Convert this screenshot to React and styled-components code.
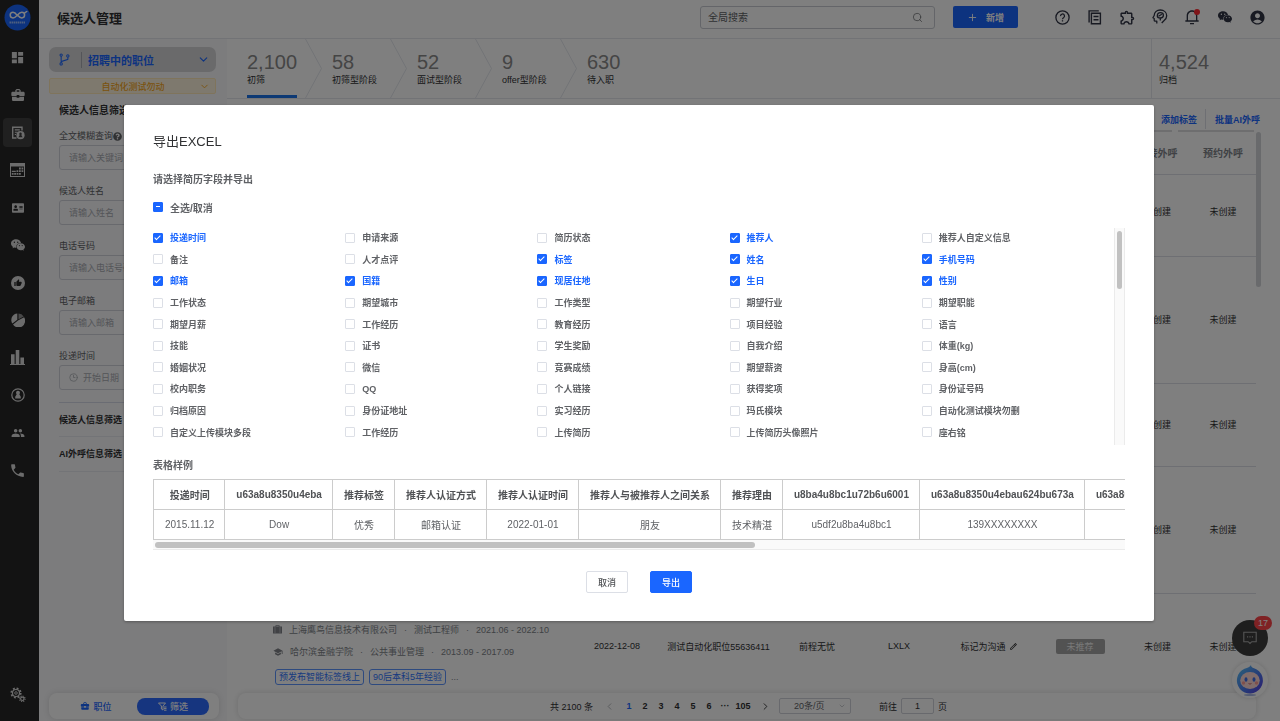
import { useEffect, useRef, useState } from "react";
import styled, { createGlobalStyle } from "styled-components";
import {
  MdAccountCircle,
  MdBusinessCenter,
  MdDashboard,
  MdOutlineExtension,
  MdPeople,
  MdPhone,
  MdSchool,
  MdThumbUp,
} from "react-icons/md";
import { AiFillWechat, AiOutlineBranches } from "react-icons/ai";
import { FaAddressCard, FaQuestionCircle } from "react-icons/fa";
import { RiNotification3Line, RiPencilLine } from "react-icons/ri";
import { ChevronDown, ChevronLeft, ChevronRight, Clock3, Plus, Search } from "lucide-react";

const GlobalStyle = createGlobalStyle`
  *, *::before, *::after {
    box-sizing: border-box;
  }

  body {
    margin: 0;
    overflow: hidden;
    color: #303133;
    font-family: "Liberation Sans", "Noto Sans CJK SC", sans-serif;
    font-size: 9px;
    background: #fff;
  }

  button, input, select {
    font-family: inherit;
    font-size: inherit;
    color: inherit;
  }

  button {
    padding: 0;
    border: 0;
    background: none;
    cursor: pointer;
  }

  a {
    color: inherit;
    text-decoration: none;
  }

  h1, h2, h3, p {
    margin: 0;
  }

  svg {
    flex: none;
  }
`;

/* ---------- page frame ---------- */

const Page = styled.div`
  display: flex;
  height: 100vh;
`;

const Sidebar = styled.nav`
  display: flex;
  flex-direction: column;
  align-items: center;
  flex: none;
  width: 39px;
  padding: 3px 0 12px;
  background: #262626;
  color: #d8d8d8;
`;

const SideList = styled.div`
  display: flex;
  flex-direction: column;
  justify-content: space-between;
  height: 442px;
  margin: 11px 0 auto;
`;

const SideLink = styled.a`
  display: flex;
  align-items: center;
  justify-content: center;
  width: 29px;
  height: 29px;
  margin-right: 4px;
  border-radius: 4px;
  background: ${({ $active }) => ($active ? "#404040" : "transparent")};
`;

const Content = styled.div`
  display: flex;
  flex-direction: column;
  flex: 1;
  min-width: 0;
`;

const Header = styled.header`
  display: flex;
  align-items: center;
  flex: none;
  height: 39px;
  padding: 0 15px 4px 18px;
  border-bottom: 1px solid #e4e7ed;
`;

const PageTitle = styled.h1`
  flex: 1;
  font-size: 13px;
  font-weight: 600;
`;

const SearchBox = styled.label`
  display: flex;
  align-items: center;
  width: 235px;
  height: 23px;
  padding: 0 11px 0 7px;
  border: 1px solid #c8cbd2;
  border-radius: 3px;
  color: #606266;
`;

const SearchInput = styled.input`
  flex: 1;
  min-width: 0;
  padding: 0;
  border: 0;
  outline: 0;
  font-size: 10px;
  background: none;

  &::placeholder {
    color: #606266;
  }
`;

const AddButton = styled.button`
  display: flex;
  align-items: center;
  justify-content: center;
  gap: 8px;
  width: 65px;
  height: 22px;
  margin: 0 36px 0 18px;
  border-radius: 2px;
  background: #1a66ff;
  color: #fff;
  font-weight: 600;
`;

const HeaderIcons = styled.div`
  display: flex;
  justify-content: space-between;
  width: 211px;
  color: #303445;
`;

const IconButton = styled.button`
  position: relative;
  display: flex;
  align-items: center;
  justify-content: center;
  width: 16px;
  height: 16px;
`;

const RedDot = styled.span`
  position: absolute;
  top: 0;
  right: 0;
  width: 6px;
  height: 6px;
  border-radius: 50%;
  background: #ff2a33;
`;

const Body = styled.div`
  display: flex;
  flex: 1;
  min-height: 0;
`;

/* ---------- filter panel ---------- */

const FilterPanel = styled.aside`
  display: flex;
  flex-direction: column;
  flex: none;
  width: 188px;
  padding: 8px 8px 2px 10px;
  background: #f8f8fa;
`;

const JobPicker = styled.button`
  display: flex;
  align-items: center;
  flex: none;
  height: 25px;
  margin-right: 3px;
  padding: 0 6px 0 8px;
  border-radius: 7px;
  background: #d4d4d6;
  color: #1a66ff;
  font-size: 11px;
  font-weight: 600;
  text-align: left;
`;

const JobName = styled.span`
  flex: 1;
  margin-left: 9px;
  padding-left: 6px;
  border-left: 1px solid #a9abb2;
`;

const Notice = styled.button`
  display: flex;
  align-items: center;
  flex: none;
  height: 16px;
  margin: 6px 3px 0 0;
  padding: 0 5px 0 17px;
  border: 1px solid #ffe9b8;
  border-radius: 2px;
  background: #fdf3dc;
  color: #f5a623;
  font-weight: 500;
`;

const NoticeText = styled.span`
  flex: 1;
`;

const FilterForm = styled.form`
  margin: 9px 0 auto 10px;
`;

const FilterTitle = styled.h2`
  margin-bottom: 10px;
  font-size: 10px;
  font-weight: 600;
  line-height: 16px;
`;

const Field = styled.label`
  display: block;
  margin-bottom: 14px;
`;

const FieldName = styled.span`
  display: flex;
  align-items: center;
  margin-bottom: 2px;
  color: #606266;
  line-height: 14px;
`;

const FieldBox = styled.span`
  display: flex;
  align-items: center;
  gap: 5px;
  height: 25px;
  padding: 0 9px;
  border: 1px solid #d0d3da;
  border-radius: 3px;
  color: #a8abb2;
`;

const FieldInput = styled.input`
  flex: 1;
  min-width: 0;
  padding: 0;
  border: 0;
  outline: 0;
  background: none;

  &::placeholder {
    color: #a8abb2;
  }
`;

const FilterSection = styled.div`
  height: 35px;
  border-bottom: 1px solid #e6e8ee;
  font-weight: 600;
  line-height: 34px;

  &:first-of-type {
    margin-top: -2px;
    border-top: 1px solid #d5d8e6;
  }
`;

const PanelTabs = styled.div`
  display: flex;
  align-items: center;
  flex: none;
  height: 26px;
  padding: 0 10px 0 6px;
  border-radius: 8px;
  background: #fff;
  box-shadow: 0 0 6px rgba(0, 0, 0, 0.12);
`;

const PanelTab = styled.button`
  display: flex;
  align-items: center;
  justify-content: center;
  gap: 3px;
  width: ${({ $active }) => ($active ? "72px" : "82px")};
  height: 17px;
  border-radius: 8px;
  background: ${({ $active }) => ($active ? "#2c6bff" : "none")};
  color: ${({ $active }) => ($active ? "#fff" : "#1a66ff")};
  font-weight: 500;
`;

/* ---------- candidates ---------- */

const Main = styled.main`
  display: flex;
  flex-direction: column;
  flex: 1;
  min-width: 0;
`;

const Stages = styled.div`
  display: flex;
  flex: none;
  height: 60px;
  border-bottom: 1px solid #e4e7ed;
`;

const Stage = styled.button`
  display: flex;
  align-items: stretch;
  justify-content: space-between;
  width: 85px;
  padding-left: 20px;
  text-align: left;
  white-space: nowrap;
`;

const StageInfo = styled.span`
  display: flex;
  flex-direction: column;
  padding-top: 12px;
  border-bottom: 3px solid ${({ $active }) => ($active ? "#1a73e8" : "transparent")};
`;

const StageCount = styled.span`
  color: #8a8a8a;
  font-size: 20px;
  line-height: 22px;
`;

const StageName = styled.span`
  line-height: 14px;
`;

const StageArrow = styled.svg`
  width: 17px;
  height: 59px;
  margin-right: -10px;
  margin-left: -30px;
`;

const Archive = styled(Stage)`
  width: 129px;
  margin-left: auto;
  padding-left: 7px;
  border-left: 1px solid #e4e7ed;
`;

const Toolbar = styled.div`
  display: flex;
  align-items: center;
  justify-content: flex-end;
  flex: none;
  height: 31px;
  padding: 9px 20px 0 0;
  color: #1a66ff;
`;

const ToolLink = styled.button`
  height: 20px;
  padding-left: 8px;
  font-weight: 600;

  & + & {
    margin-left: 8px;
    padding-left: 9px;
    border-left: 1px solid #dcdfe6;
  }
`;

const HeadLines = styled.div`
  display: flex;
  justify-content: flex-end;
  gap: 6px;
  flex: none;
  height: 2px;
  padding-right: 26px;
`;

const HeadLine = styled.span`
  width: 76px;
  background: #dcdcdf;
`;

const ListArea = styled.div`
  display: flex;
  flex: 1;
  align-items: flex-start;
  min-height: 0;
  padding: 0 19px 0 11px;
  overflow: hidden;
`;

const ListScroll = styled.div`
  flex: none;
  width: 5px;
  height: 155px;
  border-radius: 3px;
  background: #d2d4d8;
`;

const CandidateTable = styled.table`
  flex: 1;
  width: 100%;
  table-layout: fixed;
  border-collapse: collapse;
  text-align: center;

  th, td {
    padding: 0;
    border-bottom: 1px solid #dcdfe6;
    white-space: nowrap;
  }

  th {
    height: 42px;
    color: #808389;
    font-size: 10px;
    font-weight: 600;
  }
`;

const CandidateRow = styled.tr`
  height: ${({ $height }) => $height}px;

  &:first-child td {
    padding-bottom: 8px;
  }
`;

const InfoCell = styled.td`
  && {
    padding: 0 0 14px 35px;
    vertical-align: bottom;
    text-align: left;
  }
`;

const InfoLine = styled.p`
  display: flex;
  align-items: center;
  gap: 7px;
  height: 22px;
  color: #808389;
`;

const Tags = styled.div`
  display: flex;
  align-items: center;
  gap: 5px;
  margin: 6px 0 0 2px;
  color: #808389;
`;

const Tag = styled.span`
  height: 16px;
  padding: 0 3px;
  border: 1px solid #5c94ff;
  border-radius: 3px;
  color: #2f74ff;
  line-height: 14px;
`;

const StatusButton = styled.button`
  display: inline-flex;
  align-items: center;
  gap: 3px;
`;

const RecommendButton = styled.button`
  width: 49px;
  height: 15px;
  border-radius: 2px;
  background: #a4a4a4;
  color: #f0f0f0;
`;

const PaginationBar = styled.div`
  display: flex;
  align-items: center;
  flex: none;
  height: 26px;
  margin: 0 24px 2px 11px;
  padding: 0 312px;
  border-radius: 8px;
  box-shadow: 0 0 6px rgba(0, 0, 0, 0.14);
  white-space: nowrap;
`;

const PageButton = styled.button`
  display: flex;
  justify-content: center;
  flex: none;
  width: ${({ $wide }) => ($wide ? "20px" : "16px")};
  color: ${({ $active }) => ($active ? "#1a66ff" : "#303133")};
  font-weight: 700;
`;

const ArrowButton = styled(PageButton)`
  width: 24px;
  color: ${({ disabled }) => (disabled ? "#b0b3b9" : "#303133")};
`;

const Total = styled.span`
  margin-right: 4px;
`;

const PageSize = styled.label`
  position: relative;
  flex: none;
  height: 16px;
  margin: 0 28px 0 2px;
  color: #606266;

  svg {
    position: absolute;
    top: 4px;
    right: 5px;
    color: #b0b3b9;
  }
`;

const PageSizeSelect = styled.select`
  width: 72px;
  height: 16px;
  padding: 0 14px;
  appearance: none;
  border: 1px solid #d0d3da;
  border-radius: 2px;
  background: none;
`;

const JumpLabel = styled.label`
  display: flex;
  align-items: center;
  gap: 4px;
`;

const JumpInput = styled.input`
  width: 33px;
  height: 16px;
  padding: 0;
  border: 1px solid #d0d3da;
  border-radius: 2px;
  background: none;
  text-align: center;
`;

const Floating = styled.div`
  position: absolute;
  right: 12px;
  bottom: 23px;
  display: flex;
  flex-direction: column;
  gap: 6px;
`;

const ChatButton = styled.button`
  position: relative;
  display: flex;
  align-items: center;
  justify-content: center;
  width: 36px;
  height: 36px;
  border-radius: 50%;
  background: #3c3c3c;
  color: #aaa;
`;

const Badge = styled.span`
  position: absolute;
  top: -4px;
  right: -4px;
  width: 18px;
  height: 14px;
  border-radius: 7px;
  background: #ff4549;
  color: #fff;
  line-height: 14px;
`;

const RobotButton = styled.button`
  width: 36px;
  height: 36px;
  border-radius: 50%;
  background: #fff;
  box-shadow: 0 0 5px rgba(0, 0, 0, 0.15);
`;

/* ---------- export dialog ---------- */

const Overlay = styled.div`
  position: fixed;
  inset: 0;
  padding: 105px 126px 0 124px;
  background: rgba(0, 0, 0, 0.5);
`;

const Dialog = styled.section`
  padding: 28px 29px;
  border-radius: 2px;
  background: #fff;
  box-shadow: 0 1px 3px rgba(0, 0, 0, 0.3);
`;

const DialogTitle = styled.h2`
  font-size: 13px;
  font-weight: 400;
  line-height: 18px;
`;

const DialogSubtitle = styled.h3`
  margin-top: ${({ $gap }) => $gap}px;
  color: #606266;
  font-size: 10px;
  font-weight: 600;
  line-height: 16px;
`;

const CheckLabel = styled.label`
  display: flex;
  align-items: center;
  gap: 7px;
  color: ${({ $checked }) => ($checked ? "#1a66ff" : "#606266")};
  font-weight: 600;
  white-space: nowrap;
  cursor: pointer;
`;

const SelectAll = styled(CheckLabel)`
  height: 16px;
  margin-top: 11px;
  font-size: 10px;
`;

const CheckBox = styled.input`
  position: relative;
  width: 10px;
  height: 10px;
  margin: 0;
  appearance: none;
  border: 1px solid #dcdfe6;
  border-radius: 1px;
  background: #fff;

  &:checked, &:indeterminate {
    border-color: #1a66ff;
    background: #1a66ff;
  }

  &:checked::after {
    content: "";
    position: absolute;
    top: 0;
    left: 2px;
    width: 3px;
    height: 6px;
    border: solid #fff;
    border-width: 0 1px 1px 0;
    transform: rotate(45deg);
  }

  &:indeterminate::after {
    content: "";
    position: absolute;
    top: 3px;
    left: 2px;
    width: 4px;
    height: 1px;
    background: #fff;
  }
`;

const FieldList = styled.div`
  display: flex;
  margin-top: 12px;
`;

const FieldGrid = styled.div`
  display: grid;
  flex: 1;
  grid-template-columns: repeat(5, 1fr);
  grid-auto-rows: 1fr;
  height: 216px;
`;

const VerticalTrack = styled.div`
  width: 11px;
  height: 217px;
  margin-top: 1px;
  padding: 3px 2px;
  border: solid #ebebeb;
  border-width: 0 1px;
  background: #fafafa;
`;

const VerticalThumb = styled.div`
  width: 5px;
  height: 58px;
  border-radius: 3px;
  background: #c1c1c1;
`;

const SampleScroll = styled.div`
  margin-top: 5px;
  overflow: hidden;
`;

const SampleTable = styled.table`
  border-collapse: collapse;
  color: #606266;
  font-size: 10px;
  text-align: center;

  th, td {
    height: 30px;
    padding: 0 10px 0 11px;
    border: 1px solid #ccc;
    white-space: nowrap;
  }

  th {
    color: #505255;
    font-weight: 700;
  }
`;

const HorizontalTrack = styled.div`
  height: 10px;
  padding: 2px;
  border-bottom: 1px solid #ebebeb;
  background: #fafafa;
`;

const HorizontalThumb = styled.div`
  width: 62%;
  height: 6px;
  border-radius: 3px;
  background: #c1c1c1;
`;

const DialogFooter = styled.footer`
  display: flex;
  justify-content: center;
  gap: 22px;
  margin-top: 21px;
`;

const DialogButton = styled.button`
  width: 42px;
  height: 22px;
  border: 1px solid ${({ $primary }) => ($primary ? "#1a66ff" : "#dcdfe6")};
  border-radius: 2px;
  background: ${({ $primary }) => ($primary ? "#1a66ff" : "#fff")};
  color: ${({ $primary }) => ($primary ? "#fff" : "#505255")};
  font-weight: 500;
`;

/* ---------- icons ---------- */

const Logo = () => (
  <svg width="27" height="27" viewBox="0 0 27 27">
    <circle cx="13.5" cy="13.5" r="13" fill="#1a66ff" />
    <path
      d="M13 11.200c-1.400-2.100-2.600-2.900-4-2.900a2.800 2.800 0 1 0 0 5.600c3.400 0 5.200-5.600 8.800-5.600a2.800 2.800 0 1 1 0 5.600c-1.400 0-2.600-.8-4-2.700M21 8.700l1.800-1.200"
      fill="none"
      stroke="#fff"
      strokeWidth="1.5"
      strokeLinecap="round"
    />
    <path d="M5.500 18.500h16" stroke="#9dbfff" strokeWidth="2" strokeDasharray="1.500 .5" />
  </svg>
);

const ResumeIcon = () => (
  <svg width="14" height="14" viewBox="0 0 14 14" fill="none" stroke="currentColor">
    <path d="M5.500 12H1.700V1.200h9.300v3.300" strokeWidth="1.4" />
    <path d="M3.800 3.900h5M3.800 6.200h2.700M3.800 8.500h1.200" strokeWidth="1.1" />
    <circle cx="9.500" cy="9.200" r="4.100" fill="currentColor" stroke="none" />
    <path d="M9.500 6.600a1.300 1.300 0 0 1 .8 2.300l1.300 2.300H7.400l1.300-2.300a1.300 1.300 0 0 1 .8-2.300z" fill="#404040" stroke="none" />
  </svg>
);

const CalendarIcon = () => (
  <svg width="15" height="14" viewBox="0 0 15 14" fill="currentColor">
    <path d="M0 0h15v14H0zM1 3.500V13h13V3.500z" fillRule="evenodd" />
    <path d="M9 4.600h1.800v1.800H9zM11.500 4.600h1.800v1.800h-1.800zM6.500 7.200h1.800V9H6.500zM9 7.200h1.800V9H9zM11.500 7.200h1.800V9h-1.800zM1.800 7.800h4v1.200h-4zM1.800 10h1.800v1.800H1.800zM4.200 10H6v1.800H4.200zM6.600 10h1.800v1.800H6.600zM9 10h1.800v1.800H9z" />
  </svg>
);

const LikeIcon = () => (
  <svg width="14" height="14" viewBox="0 0 14 14">
    <circle cx="7" cy="7" r="7" fill="currentColor" />
    <MdThumbUp x="3" y="3" size={8} color="#262626" />
  </svg>
);

const PieIcon = () => (
  <svg width="14" height="14" viewBox="0 0 14 14" fill="currentColor">
    <path d="M6.300 6.800V.4a6.600 6.600 0 0 0-4.900 10.200z" />
    <path d="M7.500 6.200V.4a6.600 6.600 0 0 1 5.200 3z" opacity=".6" />
    <path d="M2 11.500l5-3.900 6.100-3.300A6.600 6.600 0 0 1 2 11.500z" />
  </svg>
);

const BarsIcon = () => (
  <svg width="15" height="15" viewBox="0 0 15 15" fill="currentColor">
    <path d="M1 4.300h3.600V14H1zM5.700 0h3.600v14H5.700zM10.400 7.500H14V14h-3.600zM0 14h15v1H0z" />
  </svg>
);

const PersonRingIcon = () => (
  <svg width="14" height="14" viewBox="0 0 14 14">
    <circle cx="7" cy="7" r="6.200" fill="none" stroke="currentColor" strokeWidth="1.2" />
    <path d="M7 2.700a2 2 0 0 1 1.300 3.500L9.800 8.700v1.800H4.200V8.700l1.500-2.500A2 2 0 0 1 7 2.700z" fill="currentColor" />
  </svg>
);

const GearsIcon = () => (
  <svg width="16" height="16" viewBox="0 0 16 16" fill="none" stroke="currentColor">
    <circle cx="6" cy="6" r="4.700" strokeWidth="1.8" strokeDasharray="1.850 1.850" />
    <circle cx="6" cy="6" r="3.500" strokeWidth="1.2" />
    <circle cx="6" cy="6" r="1.300" strokeWidth=".9" />
    <circle cx="12.300" cy="11.800" r="2.700" strokeWidth="1.2" strokeDasharray="1.060 1.060" />
    <circle cx="12.300" cy="11.800" r="1.700" strokeWidth="1.1" />
  </svg>
);

const HelpIcon = () => (
  <svg width="15" height="15" viewBox="0 0 15 15" fill="none" stroke="currentColor" strokeWidth="1.3">
    <circle cx="7.5" cy="7.5" r="6.6" />
    <path d="M5.500 6.100a2 2 0 1 1 3 1.600c-.7.400-1 .7-1 1.500" />
    <path d="M7.500 10.200v1.300" />
  </svg>
);

const CopyIcon = () => (
  <svg width="14" height="15" viewBox="0 0 14 15" fill="none" stroke="currentColor" strokeWidth="1.4">
    <path d="M3.400 3.200h9v10.600h-9z" />
    <path d="M1.100 12.500V.9h9.700M5.500 6.500h5M5.500 9.700h5" />
  </svg>
);

const MindIcon = () => (
  <svg width="16" height="16" viewBox="0 0 16 16" fill="none" stroke="currentColor" strokeWidth="1.3" strokeLinejoin="round">
    <path d="M4.800 14.500v-2.300H3.200a1 1 0 0 1-1-1V9.500L.9 8.800l1.300-2.300C2.300 3.200 4.900 1 8.300 1c3.700 0 6.400 2.400 6.400 5.700 0 2.400-1.300 3.900-2.800 5.100L9.700 14" />
    <path d="M8.300 11.500V9.300M5.300 7c0-2 1.200-3.400 3.100-3.400 1.700 0 3 1 3 2.600S10 9 8.300 9c-1.500 0-3-.5-3-2zM6.500 7.300l3.300-2" />
  </svg>
);

const SuitcaseIcon = () => (
  <svg width="9" height="9" viewBox="0 0 9 9" fill="currentColor">
    <path d="M2.500 1.500V.3h4v1.200H9v7H0v-7zM3.300 1.500h2.400V1H3.300z" fillRule="evenodd" />
    <path d="M2 2v6M7 2v6" stroke="#fff" strokeWidth=".4" />
  </svg>
);

const FunnelIcon = () => (
  <svg width="9" height="9" viewBox="0 0 9 9" fill="none" stroke="currentColor">
    <path d="M.5 1h7L5 4v4L3.400 7V4zM6 5h2.500M6 6.600h2.500M6 8.200h2.500" />
  </svg>
);

const ChatIcon = () => (
  <svg width="14" height="14" viewBox="0 0 14 14" fill="none" stroke="currentColor" strokeWidth="1.1">
    <path d="M.8 1.300h12.400v9.400H8.800L7 12.500l-1.800-1.800H.8z" />
    <path d="M4 5.900h1.200M6.400 5.900h1.200M8.800 5.900H10" />
  </svg>
);

const RobotFace = () => (
  <svg width="36" height="36" viewBox="0 0 36 36">
    <defs>
      <linearGradient id="robot" x1="0" y1="0" x2="1" y2="1">
        <stop offset="0" stopColor="#5cc8f5" />
        <stop offset=".55" stopColor="#4a7df0" />
        <stop offset="1" stopColor="#5a35e0" />
      </linearGradient>
    </defs>
    <ellipse cx="18" cy="33" rx="6" ry="1" fill="#a9b8e8" />
    <path d="M19 3c0 2 1 2.500 3 3.200a13 13 0 1 1-9.500.5C16 5.700 18 5 19 3z" fill="url(#robot)" />
    <ellipse cx="18" cy="18.500" rx="9.800" ry="8.500" fill="#ffd9d6" />
    <ellipse cx="14" cy="17.500" rx="1.500" ry="2.300" fill="#3f6fe8" />
    <ellipse cx="22" cy="17.500" rx="1.500" ry="2.300" fill="#3f6fe8" />
    <circle cx="11.500" cy="21" r="1.700" fill="#ff9f98" />
    <circle cx="24.500" cy="21" r="1.700" fill="#ff9f98" />
    <path d="M16.500 21.500q1.500 1.200 3 0" fill="none" stroke="#c0504d" strokeWidth=".8" />
  </svg>
);

/* ---------- data ---------- */

const sideItems = [
  { name: "工作台", icon: <MdDashboard size={15} /> },
  { name: "职位", icon: <MdBusinessCenter size={16} /> },
  { name: "候选人", icon: <ResumeIcon />, active: true },
  { name: "日程", icon: <CalendarIcon /> },
  { name: "名片", icon: <FaAddressCard size={12} /> },
  { name: "微信", icon: <AiFillWechat size={16} /> },
  { name: "推荐", icon: <LikeIcon /> },
  { name: "统计", icon: <PieIcon /> },
  { name: "报表", icon: <BarsIcon /> },
  { name: "人才库", icon: <PersonRingIcon /> },
  { name: "团队", icon: <MdPeople size={14} /> },
  { name: "外呼", icon: <MdPhone size={17} /> },
];

const filters = [
  { name: "全文模糊查询", placeholder: "请输入关键词", help: true },
  { name: "候选人姓名", placeholder: "请输入姓名" },
  { name: "电话号码", placeholder: "请输入电话号码" },
  { name: "电子邮箱", placeholder: "请输入邮箱" },
  { name: "投递时间", placeholder: "开始日期", clock: true },
];

const stages = [
  { count: "2,100", name: "初筛" },
  { count: "58", name: "初筛型阶段" },
  { count: "52", name: "面试型阶段" },
  { count: "9", name: "offer型阶段" },
  { count: "630", name: "待入职" },
];

const columnWidths = [undefined, 82, 121, 76, 88, 92, 90, 65, 66];
const rowHeights = [82, 127, 83, 127];

const exportFields = [
  "投递时间", "申请来源", "简历状态", "推荐人", "推荐人自定义信息",
  "备注", "人才点评", "标签", "姓名", "手机号码",
  "邮箱", "国籍", "现居住地", "生日", "性别",
  "工作状态", "期望城市", "工作类型", "期望行业", "期望职能",
  "期望月薪", "工作经历", "教育经历", "项目经验", "语言",
  "技能", "证书", "学生奖励", "自我介绍", "体重(kg)",
  "婚姻状况", "微信", "竞赛成绩", "期望薪资", "身高(cm)",
  "校内职务", "QQ", "个人链接", "获得奖项", "身份证号码",
  "归档原因", "身份证地址", "实习经历", "玛氏模块", "自动化测试模块勿删",
  "自定义上传模块多段", "工作经历", "上传简历", "上传简历头像照片", "座右铭",
];

const sample = [
  ["投递时间", "2015.11.12"],
  ["u63a8u8350u4eba", "Dow"],
  ["推荐标签", "优秀"],
  ["推荐人认证方式", "邮箱认证"],
  ["推荐人认证时间", "2022-01-01"],
  ["推荐人与被推荐人之间关系", "朋友"],
  ["推荐理由", "技术精湛"],
  ["u8ba4u8bc1u72b6u6001", "u5df2u8ba4u8bc1"],
  ["u63a8u8350u4ebau624bu673a", "139XXXXXXXX"],
  ["u63a8u8350u4ebau90aeu7bb1", ""],
];

/* ---------- components ---------- */

const FilterSide = () => (
  <FilterPanel>
    <JobPicker>
      <AiOutlineBranches size={15} />
      <JobName>招聘中的职位</JobName>
      <ChevronDown size={13} />
    </JobPicker>
    <Notice>
      <NoticeText>自动化测试勿动</NoticeText>
      <ChevronDown size={11} />
    </Notice>
    <FilterForm>
      <FilterTitle>候选人信息筛选</FilterTitle>
      {filters.map((item) => (
        <Field key={item.name}>
          <FieldName>
            {item.name}
            {item.help && <FaQuestionCircle size={9} />}
          </FieldName>
          <FieldBox>
            {item.clock && <Clock3 size={9} />}
            <FieldInput placeholder={item.placeholder} />
          </FieldBox>
        </Field>
      ))}
      <FilterSection>候选人信息筛选</FilterSection>
      <FilterSection>AI外呼信息筛选</FilterSection>
    </FilterForm>
    <PanelTabs>
      <PanelTab>
        <MdBusinessCenter size={10} />
        职位
      </PanelTab>
      <PanelTab $active>
        <FunnelIcon />
        筛选
      </PanelTab>
    </PanelTabs>
  </FilterPanel>
);

const Candidates = () => (
  <CandidateTable>
    <colgroup>
      {columnWidths.map((width, i) => (
        <col key={i} width={width} />
      ))}
    </colgroup>
    <thead>
      <tr>
        <th colSpan={7} />
        <th>直接外呼</th>
        <th>预约外呼</th>
      </tr>
    </thead>
    <tbody>
      {rowHeights.map((height, i) => (
        <CandidateRow key={i} $height={height}>
          <td colSpan={7} />
          <td>未创建</td>
          <td>未创建</td>
        </CandidateRow>
      ))}
      <CandidateRow $height={106}>
        <InfoCell>
          <InfoLine>
            <SuitcaseIcon />
            <span>上海鹰鸟信息技术有限公司</span>·<span>测试工程师</span>·
            <span>2021.06 - 2022.10</span>
          </InfoLine>
          <InfoLine>
            <MdSchool size={10} />
            <span>哈尔滨金融学院</span>·<span>公共事业管理</span>·
            <span>2013.09 - 2017.09</span>
          </InfoLine>
          <Tags>
            <Tag>预发布智能标签线上</Tag>
            <Tag>90后本科5年经验</Tag>
            <span>...</span>
          </Tags>
        </InfoCell>
        <td>2022-12-08</td>
        <td>测试自动化职位55636411</td>
        <td>前程无忧</td>
        <td>LXLX</td>
        <td>
          <StatusButton>
            标记为沟通
            <RiPencilLine size={9} />
          </StatusButton>
        </td>
        <td>
          <RecommendButton>未推荐</RecommendButton>
        </td>
        <td>未创建</td>
        <td>未创建</td>
      </CandidateRow>
    </tbody>
  </CandidateTable>
);

const Pagination = () => (
  <PaginationBar>
    <Total>共 2100 条</Total>
    <ArrowButton disabled aria-label="上一页">
      <ChevronLeft size={11} />
    </ArrowButton>
    {["1", "2", "3", "4", "5", "6", "···"].map((page, i) => (
      <PageButton key={page} $active={i === 0}>
        {page}
      </PageButton>
    ))}
    <PageButton $wide>105</PageButton>
    <ArrowButton aria-label="下一页">
      <ChevronRight size={11} />
    </ArrowButton>
    <PageSize>
      <PageSizeSelect aria-label="每页条数">
        <option>20条/页</option>
      </PageSizeSelect>
      <ChevronDown size={8} />
    </PageSize>
    <JumpLabel>
      前往
      <JumpInput defaultValue="1" />
      页
    </JumpLabel>
  </PaginationBar>
);

const ExportDialog = () => {
  const [checked, setChecked] = useState([0, 3, 7, 8, 9, 10, 11, 12, 13, 14]);
  const allRef = useRef(null);
  const all = checked.length === exportFields.length;

  useEffect(() => {
    allRef.current.indeterminate = checked.length > 0 && !all;
  }, [checked, all]);

  const toggle = (i) =>
    setChecked((prev) => (prev.includes(i) ? prev.filter((n) => n !== i) : [...prev, i]));

  return (
    <Dialog role="dialog" aria-labelledby="export-title">
      <DialogTitle id="export-title">导出EXCEL</DialogTitle>
      <DialogSubtitle $gap={21}>请选择简历字段并导出</DialogSubtitle>
      <SelectAll>
        <CheckBox
          ref={allRef}
          type="checkbox"
          checked={all}
          onChange={() => setChecked(all ? [] : exportFields.map((_, i) => i))}
        />
        全选/取消
      </SelectAll>
      <FieldList>
        <FieldGrid>
          {exportFields.map((name, i) => (
            <CheckLabel key={i} $checked={checked.includes(i)}>
              <CheckBox type="checkbox" checked={checked.includes(i)} onChange={() => toggle(i)} />
              {name}
            </CheckLabel>
          ))}
        </FieldGrid>
        <VerticalTrack>
          <VerticalThumb />
        </VerticalTrack>
      </FieldList>
      <DialogSubtitle $gap={13}>表格样例</DialogSubtitle>
      <SampleScroll>
        <SampleTable>
          <thead>
            <tr>
              {sample.map(([name]) => (
                <th key={name}>{name}</th>
              ))}
            </tr>
          </thead>
          <tbody>
            <tr>
              {sample.map(([name, value]) => (
                <td key={name}>{value}</td>
              ))}
            </tr>
          </tbody>
        </SampleTable>
      </SampleScroll>
      <HorizontalTrack>
        <HorizontalThumb />
      </HorizontalTrack>
      <DialogFooter>
        <DialogButton>取消</DialogButton>
        <DialogButton $primary>导出</DialogButton>
      </DialogFooter>
    </Dialog>
  );
};

export default function App() {
  return (
    <>
      <GlobalStyle />
      <Page>
        <Sidebar>
          <SideLink href="#" aria-label="首页">
            <Logo />
          </SideLink>
          <SideList>
            {sideItems.map((item) => (
              <SideLink key={item.name} href="#" aria-label={item.name} $active={item.active}>
                {item.icon}
              </SideLink>
            ))}
          </SideList>
          <SideLink href="#" aria-label="设置">
            <GearsIcon />
          </SideLink>
        </Sidebar>
        <Content>
          <Header>
            <PageTitle>候选人管理</PageTitle>
            <SearchBox>
              <SearchInput placeholder="全局搜索" />
              <Search size={11} strokeWidth={1.5} />
            </SearchBox>
            <AddButton>
              <Plus size={11} />
              新增
            </AddButton>
            <HeaderIcons>
              <IconButton aria-label="帮助"><HelpIcon /></IconButton>
              <IconButton aria-label="文档"><CopyIcon /></IconButton>
              <IconButton aria-label="插件"><MdOutlineExtension size={17} /></IconButton>
              <IconButton aria-label="智能"><MindIcon /></IconButton>
              <IconButton aria-label="通知">
                <RiNotification3Line size={16} />
                <RedDot />
              </IconButton>
              <IconButton aria-label="微信"><AiFillWechat size={16} /></IconButton>
              <IconButton aria-label="账号"><MdAccountCircle size={17} /></IconButton>
            </HeaderIcons>
          </Header>
          <Body>
            <FilterSide />
            <Main>
              <Stages>
                {stages.map((stage, i) => (
                  <Stage key={stage.name}>
                    <StageInfo $active={i === 0}>
                      <StageCount>{stage.count}</StageCount>
                      <StageName>{stage.name}</StageName>
                    </StageInfo>
                    {i < stages.length - 1 && (
                      <StageArrow viewBox="0 0 17 59" fill="none" stroke="#e4e7ed">
                        <path d="M.5 0l16 29.500L.5 59" />
                      </StageArrow>
                    )}
                  </Stage>
                ))}
                <Archive>
                  <StageInfo>
                    <StageCount>4,524</StageCount>
                    <StageName>归档</StageName>
                  </StageInfo>
                </Archive>
              </Stages>
              <Toolbar>
                <ToolLink>添加标签</ToolLink>
                <ToolLink>批量AI外呼</ToolLink>
              </Toolbar>
              <HeadLines>
                <HeadLine />
                <HeadLine />
              </HeadLines>
              <ListArea>
                <Candidates />
                <ListScroll />
              </ListArea>
              <Pagination />
            </Main>
          </Body>
        </Content>
        <Floating>
          <ChatButton aria-label="消息">
            <ChatIcon />
            <Badge>17</Badge>
          </ChatButton>
          <RobotButton aria-label="智能助手">
            <RobotFace />
          </RobotButton>
        </Floating>
      </Page>
      <Overlay>
        <ExportDialog />
      </Overlay>
    </>
  );
}
